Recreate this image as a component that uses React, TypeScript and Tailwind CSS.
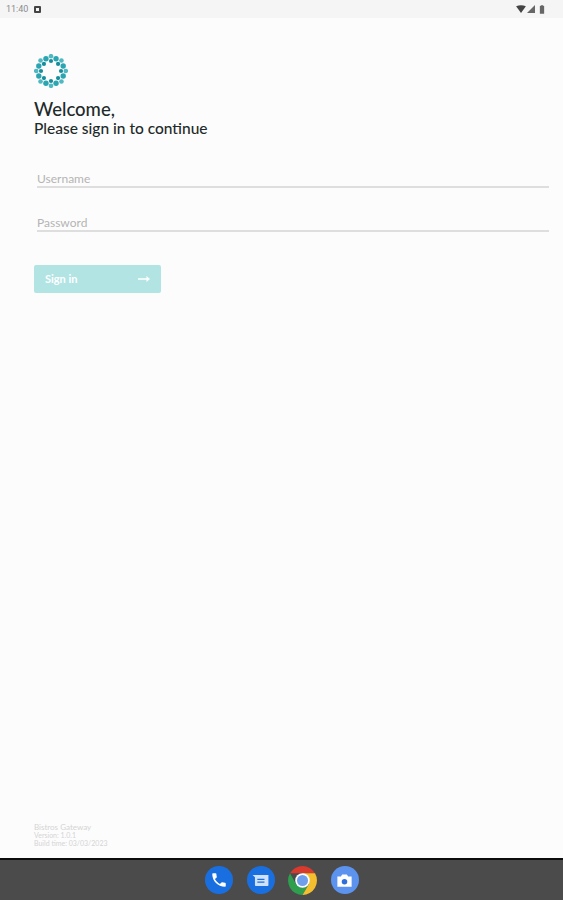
import type { ReactNode } from 'react';

// three rings of dots make up the logo
const ring = (count: number, radius: number, offset: number) =>
  Array.from({ length: count }, (_, i) => {
    const a = ((i + offset) * 2 * Math.PI) / count - Math.PI / 2;
    return { x: 17 + radius * Math.cos(a), y: 17 + radius * Math.sin(a) };
  });

const outerDots = ring(8, 14.8, 0);
const middleDots = ring(8, 13.2, 0.5);
const innerDots = ring(8, 10, 0);

const Logo = () => (
  <svg width="34" height="34" viewBox="0 0 34 34" className="block">
    {outerDots.map((d, i) => (
      <circle key={i} cx={d.x} cy={d.y} r="2.300" fill="#4fb8c1" />
    ))}
    {middleDots.map((d, i) => (
      <circle key={i} cx={d.x} cy={d.y} r="2.700" fill="#2ba5b1" />
    ))}
    {innerDots.map((d, i) => (
      <circle key={i} cx={d.x} cy={d.y} r="2.100" fill="#178d9c" />
    ))}
  </svg>
);

const StatusBar = () => (
  <div className="h-[18px] bg-[#f5f5f5] flex items-center justify-between pl-[6px] pr-[18px]">
    <div className="flex items-center gap-[6px]">
      <span className="text-[9px] leading-none text-[#8c8c8c] font-['Roboto',sans-serif]">11:40</span>
      <div className="w-[7px] h-[7px] border-2 border-[#444444] rounded-[1px]" />
    </div>
    <div className="flex items-center gap-[1px]">
      <svg width="10" height="8" viewBox="0 0 11 9">
        <path d="M0 1.500 Q5.500 -1 11 1.500 L5.500 9 Z" fill="#444444" />
      </svg>
      <svg width="8" height="8" viewBox="0 0 8 8">
        <path d="M8 0 V8 H0 Z" fill="#666666" />
      </svg>
      <svg width="6" height="9" viewBox="0 0 7 10" className="ml-[3px]">
        <path d="M2 0 H5 V1 H6 V10 H1 V1 H2 Z" fill="#666666" />
      </svg>
    </div>
  </div>
);

const Field = ({ label }: { label: string }) => (
  <div className="h-[20px] border-b-2 border-[#dedede] flex items-end ml-[3px] mr-[14px]">
    <span className="text-[12px] leading-[15px] text-[#b4b4b4]">{label}</span>
  </div>
);

const NavIcon = ({ color, children }: { color: string; children: ReactNode }) => (
  <div className={`w-[28px] h-[28px] rounded-full flex items-center justify-center ${color}`}>
    {children}
  </div>
);

const App = () => {
  return (
    <div className="w-[563px] h-[900px] flex flex-col bg-[#fcfcfc] font-['Lato',sans-serif] overflow-hidden">
      <StatusBar />

      <main className="flex-1 flex flex-col pl-[34px] pt-[36px] pb-[11px]">
        <Logo />
        <h1 className="mt-[10px] text-[18.500px] leading-[22px] font-medium text-[#1f2a2a]">Welcome,</h1>
        <h2 className="mt-[-1px] text-[15.500px] leading-[18px] font-medium text-[#1f2a2a]">Please sign in to continue</h2>

        <div className="mt-[31px] flex flex-col gap-[24px]">
          <Field label="Username" />
          <Field label="Password" />
        </div>

        <button className="mt-[33px] w-[127px] h-[28px] rounded-[2px] bg-[#b2e4e4] flex items-center justify-between pl-[11px] pr-[11px] text-white text-[11px] font-bold">
          <span>Sign in</span>
          <svg width="12" height="8" viewBox="0 0 12 8" fill="#ffffff">
            <path d="M0 3.200 H8.500 V1 L12 4 L8.500 7 V4.800 H0 Z" />
          </svg>
        </button>

        <div className="mt-auto text-[7px] leading-[8px] text-[#d4d4d4]">
          <div className="text-[8px]">Bistros Gateway</div>
          <div>Version: 1.0.1</div>
          <div>Build time: 03/03/2023</div>
        </div>
      </main>

      <nav className="h-[42px] bg-[#4b4b4b] border-t-2 border-[#0c0c0c] flex items-center justify-center gap-[14px]">
        <NavIcon color="bg-[#1a6fe0]">
          <svg width="18" height="18" viewBox="0 0 24 24" fill="#ffffff">
            <path d="M6.600 10.800c1.400 2.800 3.800 5.100 6.600 6.600l2.200-2.200c.3-.3.7-.4 1-.2 1.100.4 2.300.6 3.600.6.6 0 1 .4 1 1V20c0 .6-.4 1-1 1C10.600 21 3 13.400 3 4c0-.6.4-1 1-1h3.500c.6 0 1 .4 1 1 0 1.300.2 2.500.6 3.600.1.300 0 .7-.2 1z" />
          </svg>
        </NavIcon>
        <NavIcon color="bg-[#1a6fe0]">
          <svg width="19" height="19" viewBox="0 0 24 24">
            <path d="M2 5h20v13a1 1 0 0 1-1 1H6a1 1 0 0 1-1-1V8z" fill="#cfe1fa" />
            <path d="M8 10.500h9M8 14h9" stroke="#1a6fe0" strokeWidth="1.500" />
          </svg>
        </NavIcon>
        <svg width="29" height="29" viewBox="3 3 22 22" className="mx-[-0.500px]">
          <path d="M4.500 8.500 A11 11 0 0 1 23.500 8.500 L14 8.500 Z" fill="#d93a2e" />
          <path d="M4.500 8.500 A11 11 0 0 0 14 25 L18.800 16.800 L9.200 16.800 Z" fill="#2f9e4f" />
          <path d="M23.500 8.500 A11 11 0 0 1 14 25 L18.800 16.800 L14 8.500 Z" fill="#f4bf2f" />
          <circle cx="14" cy="14" r="5.500" fill="#ffffff" />
          <circle cx="14" cy="14" r="4.200" fill="#6f9fec" />
        </svg>
        <NavIcon color="bg-[#5c93ee]">
          <svg width="19" height="19" viewBox="0 0 24 24">
            <path d="M3 7h4.500L9 4.500h6L16.500 7H21v13H3z" fill="#ffffff" />
            <circle cx="12" cy="13.500" r="3.500" fill="#2f6fdc" />
          </svg>
        </NavIcon>
      </nav>
    </div>
  );
};

export default App;
